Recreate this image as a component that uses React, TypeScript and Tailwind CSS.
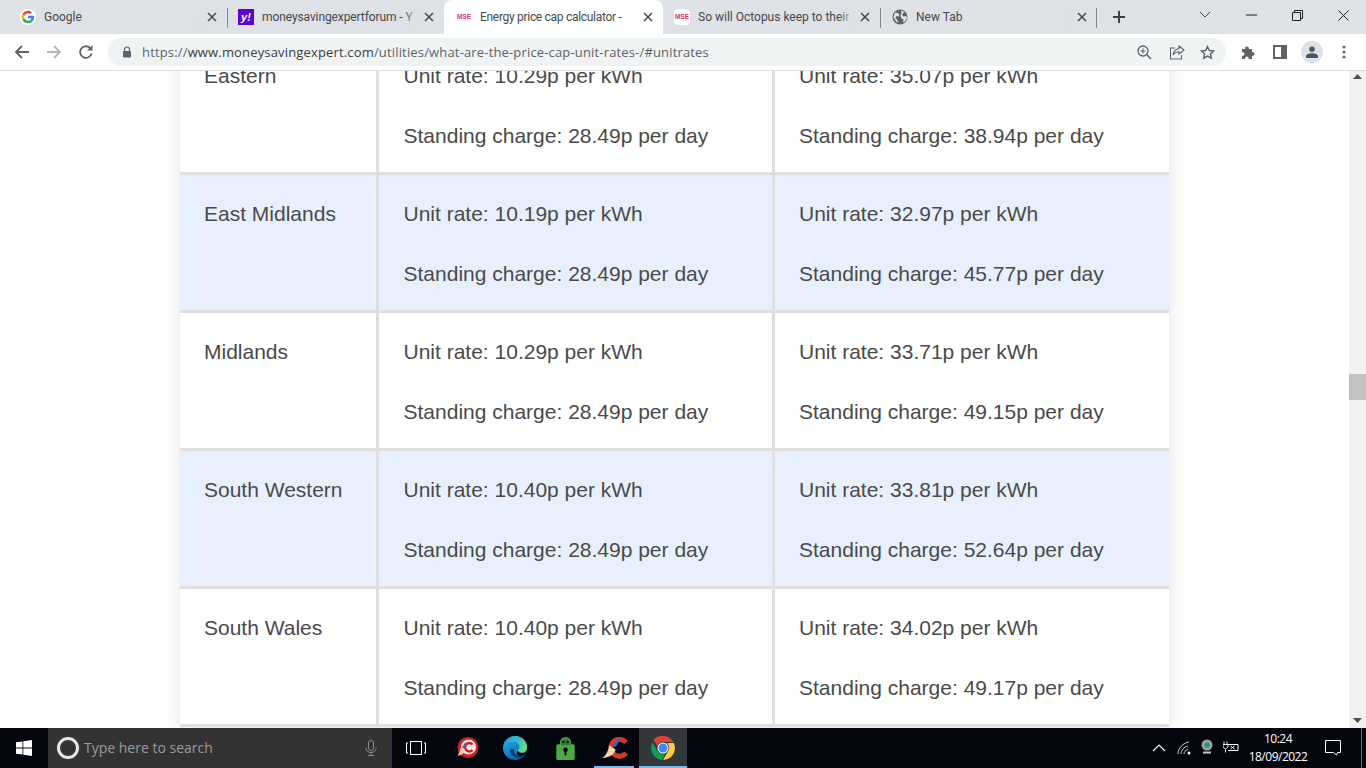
import React from "react";

const ui = { fontFamily: 'Roboto, "Noto Sans", sans-serif' };
const body = { fontFamily: '"Liberation Sans", Arial, sans-serif' };

const Close = () => (
  <svg width="10" height="10" viewBox="0 0 10 10" className="shrink-0">
    <path d="M1 1l8 8M9 1l-8 8" stroke="#45484d" strokeWidth="1.5" fill="none" />
  </svg>
);

const GoogleIcon = () => (
  <svg width="16" height="16" viewBox="6 6 36 36" className="shrink-0">
    <circle cx="24" cy="24" r="18" fill="#fff" />
    <path fill="#EA4335" d="M24 10c3.600 0 6.600 1.300 9 3.400l-4 4c-1.300-1.200-3-1.900-5-1.900-3.900 0-7.100 2.600-8.300 6.100l-4.700-3.600C13.300 13.400 18.200 10 24 10z" />
    <path fill="#4285F4" d="M37.700 24.300c0-1-.1-2-.3-2.900H24v5.600h7.700c-.3 1.800-1.300 3.300-2.900 4.300l4.500 3.500c2.700-2.500 4.400-6.100 4.400-10.500z" />
    <path fill="#FBBC05" d="M15.700 26.300c-.3-.7-.5-1.500-.5-2.300s.2-1.600.4-2.400L11 18c-1 1.900-1.500 3.900-1.500 6s.5 4.100 1.500 6z" />
    <path fill="#34A853" d="M24 38c3.800 0 7-1.200 9.300-3.400l-4.500-3.500c-1.300.8-2.900 1.400-4.800 1.400-3.900 0-7.100-2.600-8.300-6.100L11 30c2.400 4.700 7.300 8 13 8z" />
  </svg>
);

const YahooIcon = () => (
  <span className="flex h-4 w-4 shrink-0 items-center justify-center bg-[#5f01d1] text-[11px] font-bold italic leading-none text-white" style={body}>
    y!
  </span>
);

const MseIcon = () => (
  <span className="flex h-4 w-4 shrink-0 items-center justify-center rounded-sm bg-white text-[6.500px] font-bold leading-none text-[#e0355c]" style={body}>
    MSE
  </span>
);

const GlobeIcon = () => (
  <svg width="16" height="16" viewBox="0 0 16 16" className="shrink-0">
    <circle cx="8" cy="8" r="7.500" fill="#5f6368" />
    <path d="M3 3.500l3 .5 1.500 2-1 1.500-2-.5-1 1.500 2 3 1 2.500-2.500-1.500L1.500 8zM9 1.500l3.500 1.500-1.500 1.500-1 1.500 1.500 1.500 3-.5.500 2-2 3.500-2 1 .5-3-2.500-1.500-.5-3 1-1.500z" fill="#dee1e6" />
  </svg>
);

type TabProps = { icon: React.ReactNode; label: string; width: string; active?: boolean; sep?: boolean; iconGap: string; closeMr: string; track?: string };

const Tab = ({ icon, label, width, active, sep, iconGap, closeMr, track }: TabProps) => (
  <div className={`relative flex h-[34px] shrink-0 items-center ${width} ${iconGap} ${active ? "rounded-t-lg bg-white" : ""}`}>
    {icon}
    <span className={`relative ml-2 min-w-0 flex-1 overflow-hidden whitespace-nowrap text-[12px] leading-[16px] text-[#45484d] ${track ?? ""}`}>
      {label}
      <span className={`absolute right-0 top-0 h-full w-4 bg-gradient-to-r from-transparent ${active ? "to-white" : "to-[#dee1e6]"}`} />
    </span>
    <span className={`ml-[5px] flex ${closeMr}`}>
      <Close />
    </span>
    {sep && <span className="absolute right-0 top-[8px] h-5 w-px bg-[#85888d]" />}
  </div>
);

const ToolbarIcons = {
  back: (
    <svg width="16" height="16" viewBox="0 0 16 16" className="shrink-0">
      <path d="M15 8H2M8 2L2 8l6 6" stroke="#5f6368" strokeWidth="1.800" fill="none" />
    </svg>
  ),
  forward: (
    <svg width="16" height="16" viewBox="0 0 16 16" className="shrink-0">
      <path d="M1 8h13M8 2l6 6-6 6" stroke="#b4b7bb" strokeWidth="1.800" fill="none" />
    </svg>
  ),
  reload: (
    <svg width="16" height="16" viewBox="0 0 16 16" className="shrink-0">
      <path d="M13.500 9.500A5.800 5.800 0 1 1 12 4" stroke="#5f6368" strokeWidth="1.800" fill="none" />
      <path d="M14.500 1v5.500H9z" fill="#5f6368" />
    </svg>
  ),
  lock: (
    <svg width="10" height="12" viewBox="0 0 10 12" className="shrink-0">
      <path d="M2.500 5V3.500a2.500 2.500 0 0 1 5 0V5" stroke="#5f6368" strokeWidth="1.200" fill="none" />
      <rect x="1" y="5" width="8" height="6.500" rx="1" fill="#5f6368" />
    </svg>
  ),
  zoom: (
    <svg width="15" height="15" viewBox="0 0 15 15" className="shrink-0">
      <circle cx="6" cy="6" r="5" stroke="#5f6368" strokeWidth="1.300" fill="none" />
      <path d="M9.800 9.800L14 14" stroke="#5f6368" strokeWidth="1.500" />
      <path d="M3.500 6h5M6 3.500v5" stroke="#5f6368" strokeWidth="1.100" />
    </svg>
  ),
  share: (
    <svg width="16" height="15" viewBox="0 0 16 15" className="shrink-0">
      <path d="M6 3H1.500v11h11v-4" stroke="#5f6368" strokeWidth="1.100" fill="none" />
      <path d="M10 1l5 4-5 4V6.700C7.500 6.700 5.500 7.600 4 10c.4-3.500 2.500-6 6-6.300z" stroke="#5f6368" strokeWidth="1.100" fill="none" />
    </svg>
  ),
  star: (
    <svg width="15" height="15" viewBox="0 0 24 24" className="shrink-0">
      <path d="M12 2.500l2.900 6.300 6.900.8-5.100 4.700 1.400 6.800-6.100-3.400-6.100 3.400 1.400-6.800L2.200 9.600l6.900-.8z" stroke="#5f6368" strokeWidth="2.200" fill="none" />
    </svg>
  ),
  puzzle: (
    <svg width="15" height="15" viewBox="0 0 15 15" className="shrink-0">
      <path d="M1 4h3.200a1.900 1.900 0 1 1 3.600 0H11v3.200a1.900 1.900 0 1 1 0 3.600V14H7.500a1.800 1.800 0 1 0-3.400 0H1v-3.200a1.900 1.900 0 1 0 0-3.600z" fill="#5f6368" />
    </svg>
  ),
  panel: (
    <svg width="14" height="14" viewBox="0 0 14 14" className="shrink-0">
      <rect x="1" y="1" width="12" height="12" fill="none" stroke="#5f6368" strokeWidth="2" />
      <rect x="8" y="1" width="5" height="12" fill="#5f6368" />
    </svg>
  ),
  profile: (
    <span className="flex h-[22px] w-[22px] shrink-0 items-center justify-center rounded-full bg-[#dee1e6]">
      <svg width="12" height="12" viewBox="0 0 12 12">
        <circle cx="6" cy="3.200" r="2.700" fill="#45576d" />
        <path d="M0 12V10.500C0 8.500 3 7.300 6 7.300s6 1.200 6 3.200V12z" fill="#45576d" />
      </svg>
    </span>
  ),
  dots: (
    <svg width="4" height="14" viewBox="0 0 4 14" className="shrink-0">
      <circle cx="2" cy="2" r="1.500" fill="#5f6368" />
      <circle cx="2" cy="7" r="1.500" fill="#5f6368" />
      <circle cx="2" cy="12" r="1.500" fill="#5f6368" />
    </svg>
  ),
};

const rows = [
  { region: "Eastern", e: "10.29p", es: "28.49p", g: "35.07p", gs: "38.94p", blue: false },
  { region: "East Midlands", e: "10.19p", es: "28.49p", g: "32.97p", gs: "45.77p", blue: true },
  { region: "Midlands", e: "10.29p", es: "28.49p", g: "33.71p", gs: "49.15p", blue: false },
  { region: "South Western", e: "10.40p", es: "28.49p", g: "33.81p", gs: "52.64p", blue: true },
  { region: "South Wales", e: "10.40p", es: "28.49p", g: "34.02p", gs: "49.17p", blue: false },
];

const Rates = ({ rate, charge, w }: { rate: string; charge: string; w: string }) => (
  <div className={`${w} shrink-0 border-l-[3px] border-[#dfdfdf] pt-6`}>
    <p className="h-[30px] leading-[30px]">Unit rate: {rate} per kWh</p>
    <p className="mt-[30px] h-[30px] leading-[30px]">Standing charge: {charge} per day</p>
  </div>
);

const WinLogo = () => (
  <svg width="16" height="16" viewBox="0 0 16 16">
    <path d="M0 2.300L6.500 1.400V7.600H0zM7.300 1.300L16 0V7.600H7.300zM0 8.400H6.500V14.600L0 13.700zM7.300 8.400H16V16L7.300 14.700z" fill="#fff" />
  </svg>
);

const TaskIcon = ({ children, active, under }: { children: React.ReactNode; active?: boolean; under?: boolean }) => (
  <div className={`relative flex h-10 w-12 shrink-0 items-center justify-center ${active ? "bg-[#33373b]" : ""}`}>
    {children}
    {under && <span className={`absolute bottom-0 h-[2px] bg-[#76b9ed] ${active ? "left-0 right-0" : "left-1 right-1"}`} />}
  </div>
);

export default function App() {
  return (
    <div className="flex h-[768px] w-[1366px] flex-col overflow-hidden bg-white" style={ui}>
      {/* tab strip */}
      <div className="flex h-[34px] shrink-0 items-center bg-[#dee1e6]">
        <Tab width="w-[228px]" iconGap="pl-[20px]" closeMr="mr-[11px]" icon={<GoogleIcon />} label="Google" sep />
        <Tab width="w-[216px]" iconGap="pl-[10px]" closeMr="mr-[10px]" icon={<YahooIcon />} label="moneysavingexpertforum - Y" track="tracking-[-0.1px]" />
        <Tab width="w-[219px]" iconGap="pl-[12px]" closeMr="mr-[10px]" icon={<MseIcon />} label="Energy price cap calculator -" active track="tracking-[-0.3px]" />
        <Tab width="w-[218px]" iconGap="pl-[11px]" closeMr="mr-[11px]" icon={<MseIcon />} label="So will Octopus keep to their" sep />
        <Tab width="w-[216px]" iconGap="pl-[11px]" closeMr="mr-[10px]" icon={<GlobeIcon />} label="New Tab" sep track="-ml-px" />
        <span className="ml-[15px] flex w-[14px] justify-center">
          <svg width="14" height="14" viewBox="0 0 14 14">
            <path d="M7 1v12M1 7h12" stroke="#3c4043" strokeWidth="2" />
          </svg>
        </span>
        <div className="ml-auto flex h-[34px] items-start">
          <span className="flex h-[30px] w-[46px] items-center justify-center">
            <svg width="12" height="8" viewBox="0 0 12 8"><path d="M1 1l5 5 5-5" stroke="#3c4043" strokeWidth="1" fill="none" /></svg>
          </span>
          <span className="flex h-[30px] w-[46px] items-center justify-center">
            <svg width="11" height="2" viewBox="0 0 11 2"><path d="M0 1h11" stroke="#202124" strokeWidth="1" /></svg>
          </span>
          <span className="flex h-[30px] w-[46px] items-center justify-center">
            <svg width="11" height="11" viewBox="0 0 11 11"><path d="M.5 2.500h8v8h-8zM2.500 2.500v-2h8v8h-2" stroke="#202124" strokeWidth="1" fill="none" /></svg>
          </span>
          <span className="flex h-[30px] w-[46px] items-center justify-center">
            <svg width="11" height="11" viewBox="0 0 11 11"><path d="M.5.500l10 10M10.500.500l-10 10" stroke="#202124" strokeWidth="1" /></svg>
          </span>
        </div>
      </div>

      {/* toolbar */}
      <div className="flex h-[37px] shrink-0 items-start border-b border-[#dadce0] bg-white pt-[4px]">
        <div className="flex h-7 items-center">
          <span className="ml-[14px]">{ToolbarIcons.back}</span>
          <span className="ml-[16px]">{ToolbarIcons.forward}</span>
          <span className="ml-[16px]">{ToolbarIcons.reload}</span>
        </div>
        <div className="ml-[14px] flex h-7 w-[1118px] items-center rounded-full bg-[#eff3f4] pl-[14px] pr-[11px]">
          {ToolbarIcons.lock}
          <span className="ml-[10px] whitespace-nowrap text-[13px] leading-none tracking-[0.16px] text-[#5f6368]" style={{ fontFamily: '"Open Sans", sans-serif' }}>
            https://<span className="text-[#3c4043]">www.moneysavingexpert.com</span>/utilities/what-are-the-price-cap-unit-rates-/#unitrates
          </span>
          <span className="ml-auto flex items-center">
            {ToolbarIcons.zoom}
            <span className="ml-[17px]">{ToolbarIcons.share}</span>
            <span className="ml-[15px]">{ToolbarIcons.star}</span>
          </span>
        </div>
        <div className="flex h-7 items-center">
          <span className="ml-[15px]">{ToolbarIcons.puzzle}</span>
          <span className="ml-[17px]">{ToolbarIcons.panel}</span>
          <span className="ml-[14px]">{ToolbarIcons.profile}</span>
          <span className="ml-[19px]">{ToolbarIcons.dots}</span>
        </div>
      </div>

      {/* page */}
      <div className="flex min-h-0 flex-1">
        <div className="min-w-0 flex-1 overflow-hidden">
          <div
            className="ml-[180px] -mt-[34px] w-[989px] text-[21px] text-[#4a4a4a] shadow-[0_0_16px_rgba(0,0,0,0.12)]"
            style={body}
          >
            {rows.map((r) => (
              <div key={r.region} className={`flex h-[138px] border-b-[3px] border-[#dfdfdf] ${r.blue ? "bg-[#e8f0fe]" : "bg-white"}`}>
                <div className="w-[196px] shrink-0 pl-6 pt-6">
                  <p className="h-[30px] leading-[30px]">{r.region}</p>
                </div>
                <Rates w="w-[396px] pl-[24.5px]" rate={r.e} charge={r.es} />
                <Rates w="w-[397px] pl-6" rate={r.g} charge={r.gs} />
              </div>
            ))}
          </div>
        </div>
        {/* scrollbar */}
        <div className="flex w-[17px] shrink-0 flex-col items-center bg-[#f1f1f1]">
          <svg width="9" height="5" viewBox="0 0 9 5" className="mt-[3px]"><path d="M4.500 0L9 5H0z" fill="#505050" /></svg>
          <div className="mt-[295px] h-[26px] w-full bg-[#c1c1c1]" />
          <div className="flex-1" />
          <svg width="9" height="5" viewBox="0 0 9 5" className="mb-[5px]"><path d="M4.500 5L9 0H0z" fill="#505050" /></svg>
        </div>
      </div>

      {/* taskbar */}
      <div className="flex h-10 shrink-0 items-center bg-[#03060c]" style={{ fontFamily: '"Open Sans", sans-serif' }}>
        <div className="flex h-10 w-12 shrink-0 items-center justify-center"><WinLogo /></div>
        <div className="flex h-10 w-[344px] shrink-0 items-center bg-[#333333] pl-[9px]">
          <span className="h-[22px] w-[22px] shrink-0 rounded-full border-[3px] border-[#e8e8e8]" />
          <span className="ml-[5px] whitespace-nowrap text-[14px] leading-none text-[#9a9a9a]">Type here to search</span>
          <svg width="12" height="16" viewBox="0 0 12 16" className="ml-auto mr-[15px]">
            <rect x="3.500" y=".5" width="5" height="10" rx="2.500" stroke="#8a8a8a" fill="none" />
            <path d="M1 7.500v1a5 4 0 0 0 10 0v-1M6 12.500v3M3 15.500h6" stroke="#8a8a8a" fill="none" />
          </svg>
        </div>
        <TaskIcon>
          <svg width="20" height="14" viewBox="0 0 20 14">
            <rect x="4.500" y=".5" width="11" height="13" stroke="#fff" fill="none" />
            <path d="M2 2H.5v10H2M18 2h1.500v10H18" stroke="#fff" fill="none" />
          </svg>
        </TaskIcon>
        <span className="w-[3px] shrink-0" />
        <TaskIcon>
          <svg width="24" height="24" viewBox="0 0 24 24">
            <circle cx="13" cy="11.500" r="10.500" fill="#c8232c" />
            <circle cx="13.500" cy="11" r="7.500" fill="#f5e9e4" />
            <path d="M17.500 8.500a4.200 4.200 0 1 0 0 5.500" stroke="#c8232c" strokeWidth="2.400" fill="none" />
            <path d="M10 6.500l1.500 1-3 5-1.500-1z" fill="#2b6cc4" />
            <path d="M6 11l4 3c-.5 3-3.500 5.500-7.500 5.500C4.500 17 5 14 6 11z" fill="#f1cba0" />
          </svg>
        </TaskIcon>
        <TaskIcon>
          <svg width="24" height="24" viewBox="0 0 24 24">
            <defs>
              <linearGradient id="edgeA" x1="0" y1="0" x2="0.7" y2="1">
                <stop offset="0" stopColor="#2bb4ec" />
                <stop offset="1" stopColor="#0b5aa8" />
              </linearGradient>
              <linearGradient id="edgeB" x1="0" y1="0.300" x2="1" y2="0.600">
                <stop offset="0" stopColor="#1b9de2" />
                <stop offset="0.600" stopColor="#35c1c1" />
                <stop offset="1" stopColor="#6fe07a" />
              </linearGradient>
            </defs>
            <circle cx="12" cy="12" r="12" fill="url(#edgeA)" />
            <path d="M0.500 10C2 4 7 0 12 0c7 0 12 5 12 11 0 3.500-2.500 6-6 6-2.500 0-4.500-1-5.500-2.500 2.500 0 4-1.500 4-3.500 0-3-3-5-6-5-4.500 0-8.500 1-10.500 4z" fill="url(#edgeB)" />
            <path d="M7 14c0 4.500 4 8 9 8 2.500 0 5-1 6.500-3-2 .8-4 1-6 .8C12.500 19.500 10.500 17 11 13.500c-1.500-.5-3.500-.3-4 .5z" fill="#0a3d78" />
            <path d="M14.500 14.500c1 1.700 3 2.500 5 2.500 1.500 0 3-.6 4-1.800-.6 1.600-1.400 2.800-2.500 3.800-2 1-4 1.100-5.500.8-1.700-.9-2-3-1-5.300z" fill="#03060c" />
          </svg>
        </TaskIcon>
        <span className="w-[2px] shrink-0" />
        <TaskIcon>
          <svg width="19" height="24" viewBox="0 0 20 26">
            <path d="M4 9V7a6 6 0 0 1 12 0v2h1.500A2 2 0 0 1 20 11v13a2 2 0 0 1-2 2H2a2 2 0 0 1-2-2V11a2 2 0 0 1 2-2z" fill="#4ea845" />
            <path d="M5 10V7.500a5 4.500 0 0 1 10 0V10z" fill="#2c7a34" />
            <ellipse cx="7.500" cy="6.500" rx="1.300" ry="1" fill="#03060c" />
            <ellipse cx="12.500" cy="6.500" rx="1.300" ry="1" fill="#03060c" />
            <circle cx="10" cy="15" r="2.500" fill="#03060c" />
            <rect x="9" y="15" width="2" height="6" fill="#03060c" />
          </svg>
        </TaskIcon>
        <span className="w-[1px] shrink-0" />
        <TaskIcon under>
          <svg width="27" height="22" viewBox="0 0 27 22">
            <path d="M25 5.500A8.500 8.500 0 1 0 25 16" stroke="#d8342a" strokeWidth="5" fill="none" />
            <path d="M17.500 1l2 1.300-5 8-2.500-1.500z" fill="#2b6cc4" />
            <path d="M8.500 8.500l6 4c-.5 4-5 8-13.500 8.500C5 19 7 14 8.500 8.500z" fill="#f5d6ac" />
          </svg>
        </TaskIcon>
        <span className="w-[1px] shrink-0" />
        <TaskIcon active under>
          <svg width="24" height="24" viewBox="0 0 48 48">
            <path fill="#db4437" d="M24 0c8.900 0 16.700 4.800 20.800 12H24a12 12 0 0 0-11.400 8.200L5 7.500A24 24 0 0 1 24 0z" />
            <path fill="#0f9d58" d="M3 12.500l10.400 18A12 12 0 0 0 28.600 35L21.700 47.900A24 24 0 0 1 3 12.500z" />
            <path fill="#ffcd40" d="M45.700 14A24 24 0 0 1 24 48l10.400-18A12 12 0 0 0 32 14z" />
            <circle cx="24" cy="24" r="11" fill="#fff" />
            <circle cx="24" cy="24" r="9" fill="#4285f4" />
          </svg>
        </TaskIcon>
        <div className="ml-auto flex h-10 items-center">
          <svg width="14" height="8" viewBox="0 0 14 8"><path d="M1 7l6-6 6 6" stroke="#fff" strokeWidth="1.200" fill="none" /></svg>
          <svg width="15" height="14" viewBox="0 0 15 14" className="ml-[11px]">
            <path d="M1 13C1 7 6 2 12 1M4 13c0-4 3-7 7-8M7 13c0-2 1.500-4 4-4.500" stroke="#d0d0d0" fill="none" />
            <circle cx="12" cy="12" r="1.500" fill="#fff" />
          </svg>
          <svg width="14" height="15" viewBox="0 0 14 15" className="ml-2 -mt-[3px]">
            <circle cx="7" cy="6" r="5.500" fill="#9aa3a5" />
            <circle cx="7" cy="6" r="2.800" fill="#2c8f8d" />
            <path d="M3 13.500h8" stroke="#c8c8c8" strokeWidth="2" />
          </svg>
          <svg width="16" height="12" viewBox="0 0 16 12" className="ml-[9px] -mt-[3px]">
            <path d="M1 .5v3M4 .5v3M0 3.500h5V6L2.500 8 0 6zM2.500 8v3.500" stroke="#fff" fill="none" strokeWidth=".9" />
            <path d="M5 3.500h10v6H5" stroke="#fff" fill="none" />
            <path d="M7.500 5l4 3M11.500 5l-4 3" stroke="#fff" />
          </svg>
          <div className="flex w-[78px] flex-col items-center text-[12px] leading-[18px] tracking-[-0.5px] text-white">
            <span>10:24</span>
            <span>18/09/2022</span>
          </div>
          <svg width="16" height="17" viewBox="0 0 16 17" className="ml-2">
            <path d="M.5.500h15v12h-3l-1 2.500-3-2.500H.5z" stroke="#fff" fill="none" />
          </svg>
          <span className="ml-[20px] mr-[4px] h-10 w-px bg-[#6a6e72]" />
        </div>
      </div>
    </div>
  );
}
